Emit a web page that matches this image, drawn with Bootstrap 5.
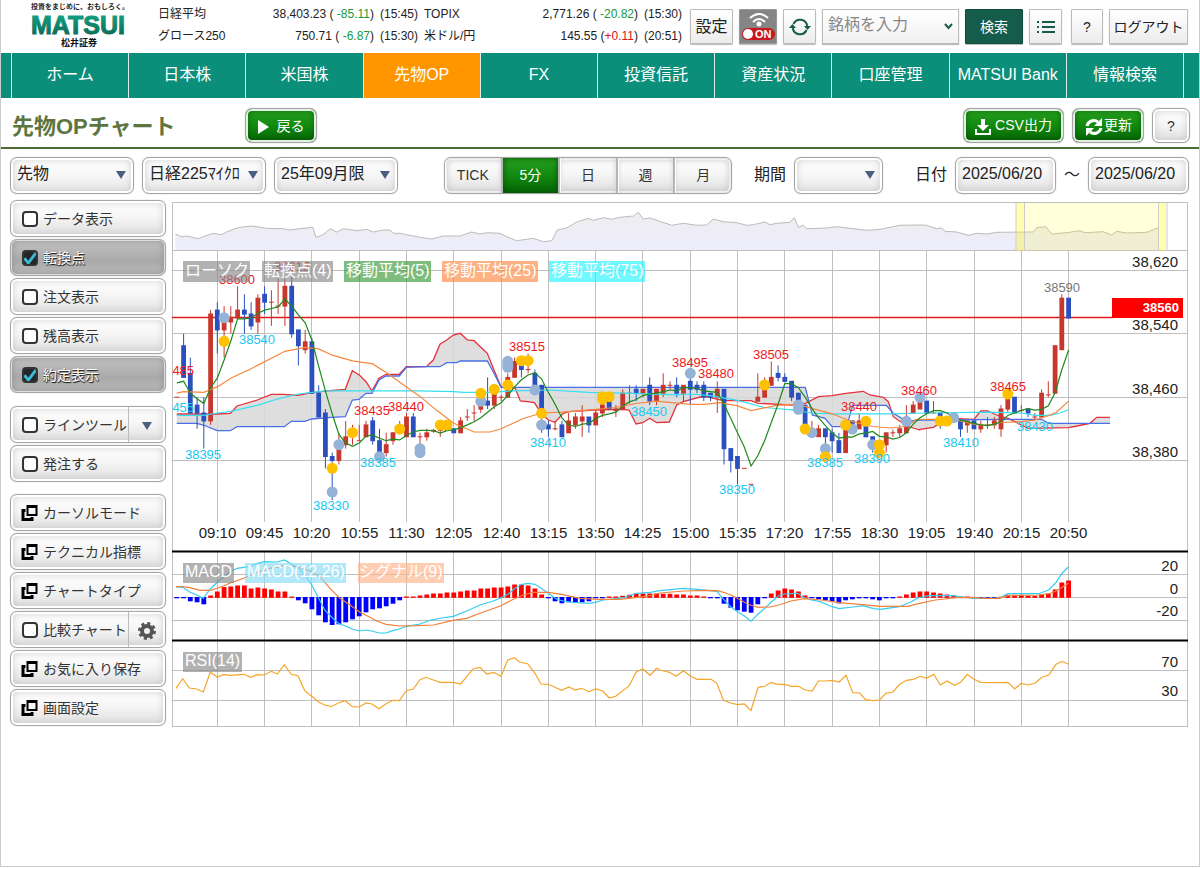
<!DOCTYPE html>
<html lang="ja">
<head>
<meta charset="utf-8">
<meta name="viewport" content="width=device-width, initial-scale=1">
<title>先物OPチャート</title>
<link href="https://cdn.jsdelivr.net/npm/bootstrap@5.3.0/dist/css/bootstrap.min.css" rel="stylesheet">
<style>
:root{--teal:#0b8e7a;--teal-dark:#155c4a;--rule:#4d6b35}
body{font-family:"Liberation Sans","Noto Sans CJK JP",sans-serif;font-size:14px;line-height:20px;color:#222;background:#fff}
.page-frame{min-height:calc(100vh - 2px);border:1px solid #ccc;border-top:0}
.top-bar{height:53px;padding-right:11px}
.brand-box{width:104px;margin-left:26px;color:#222}
.quotes{font-size:12px;color:#222;margin-left:27px;margin-bottom:4px}
.quotes td,.quotes th{padding:0;height:22px;white-space:nowrap;font-weight:400}
.q-name{width:90px}.q-val{width:126px;text-align:right}.q-time{width:50px;text-align:right;padding-right:6px!important}
.q-name2{width:80px}.q-val2{width:134px;text-align:right}
.up{color:#d8141c}.down{color:#159a40}
.tools{gap:6px}
.tool{height:35px;border:1px solid #bbb;border-radius:1px;background:linear-gradient(#fff,#ececec);color:#222;padding:0;box-shadow:0 1px 1px #bbb;display:flex;align-items:center;justify-content:center;font-size:16px;flex:none;white-space:nowrap}
.w33{width:33px}
.tool-help{width:32px;margin-left:3px;font-size:14px}
.tool-search{background:var(--teal-dark);color:#fff;width:58px;font-size:14px;border-color:#0f4a3b}
.tool-set{width:43px}
.tool-out{width:79px;font-size:14px}
.tool-live{background:#858585;width:38px;border-color:#999}
.symbol-box{width:137px;height:35px;position:relative}
.symbol-box input{width:100%;height:35px;border:1px solid #bbb;background:linear-gradient(#fff,#f1f1f1);box-shadow:0 1px 1px #bbb;padding:0 20px 3px 5px;font-size:16px}
.symbol-box input::placeholder{color:#888}
.symbol-box svg{position:absolute;right:6px;top:14px}
.main-nav{background:var(--teal);height:45px;padding:0 15px 0 10px}
.main-nav a{flex:1 1 0;color:#fff;font-size:16px;text-decoration:none;text-align:center;line-height:44px;border-left:1px solid #d8eeea;white-space:nowrap}
.main-nav a:last-child{border-right:1px solid #d8eeea}
.main-nav a.active{background:#ff9600}
.title-row{height:51px;border-bottom:2px solid var(--rule);padding:6px 9px 0 11px}
.title-row h1{font-size:22px;font-weight:700;color:#5d7540;width:233px;line-height:30px;padding-top:2px}
.gloss{border:1px solid #a6a6a6;border-radius:7px;color:#333;background:linear-gradient(#fff,#f6f6f6 45%,#dedede);box-shadow:0 0 1px #999,inset 0 0 0 2px #fff,inset 0 0 8px #bbb;height:37px;padding:0;font-size:14px}
.green{height:35px;background:linear-gradient(#27a020,#128a10 50%,#046304);color:#fff;box-shadow:0 0 1px #999,inset 0 0 0 2px #e3f0e3,inset 0 0 7px #034d03}
.w-back{width:72px}.w-csv{width:101px}.w-ask{width:38px;height:35px}
.controls{padding:7px 10px 6px 9px;height:51px}
.controls select,.controls input{font-size:16px;color:#222;appearance:none;padding:0 0 3px 6px;flex:none}
.controls select{width:124px;background-image:url("data:image/svg+xml,%3Csvg xmlns='http://www.w3.org/2000/svg' width='10' height='8'%3E%3Cpath d='M0 0h10l-5 8z' fill='%234a5f80'/%3E%3C/svg%3E"),linear-gradient(#fff,#f6f6f6 50%,#e4e4e4);background-repeat:no-repeat;background-position:right 7px top 13px,0 0}
.controls .narrow{width:89px}
.controls .date{width:101px}
.controls label{font-size:16px}
.gap-label{margin-left:22px}
.range{width:288px;margin-left:46px;display:flex;overflow:hidden;flex:none}
.range button{flex:1;border:0;border-left:2px solid #b5b5b5;background:none;box-shadow:inset 1px 0 0 #fff,inset 0 0 5px #ccc;color:#333;padding:0}
.range button:first-child{border-left:0}
.range button.active{background:linear-gradient(#27a020,#128a10 50%,#046304);color:#fff;box-shadow:inset 0 0 6px #045004}
.work{padding:0 11px 0 9px;gap:6px}
.side{width:156px;flex:none;gap:2px}
.side .gloss{display:flex;align-items:center;gap:5px;padding:0 0 0 10px;width:100%;cursor:pointer;text-align:left;white-space:nowrap}
.side .on{background:linear-gradient(#c2c2c2,#a9a9a9 60%,#bbb);color:#fff;text-shadow:1px 1px 1px #222,0 1px 0 #444;box-shadow:0 0 1px #999,inset 0 0 0 1px #ddd,inset 0 0 7px #888}
.side input{appearance:none;width:16px;height:16px;border:2px solid #333;border-radius:4px;background:#fff;margin:0 0 0 1px;flex:none}
.side input:checked{background:#23272b url("data:image/svg+xml,%3Csvg xmlns='http://www.w3.org/2000/svg' viewBox='0 0 16 16'%3E%3Cpath d='M2 8l4 5L15 1' fill='none' stroke='%2339b9d6' stroke-width='3'/%3E%3C/svg%3E") center/15px no-repeat}
.side .split{gap:0}
.side .split label{display:flex;gap:5px;align-items:center;height:100%;width:108px;border-right:1px solid #bbb}
.side .split button{border:0;background:none;padding:0;flex:1;height:100%}
.set-top{margin-top:11px}
.set-top2{margin-top:10px}
.plot{flex:1;min-width:0;padding-top:2px}
.plot svg{display:block;width:100%;height:auto;font-family:"Liberation Sans","Noto Sans CJK JP",sans-serif}
.gridline{stroke:#bfbfbf;stroke-width:1}
.axis{font-size:15px;fill:#222}
.tag{font-size:16px;fill:#fff}
.pk{font-size:13px;fill:#f01820;text-anchor:middle}
.bt{font-size:13px;fill:#18c8f0;text-anchor:middle}
.now{fill:#777}
</style>
</head>
<body>
<div class="page-frame">
<header class="top-bar d-flex align-items-center">
  <a href="#" class="brand-box text-decoration-none" aria-label="松井証券">
    <svg class="d-block" width="104" height="53" viewBox="0 0 104 53" font-family="Liberation Sans, Noto Sans CJK JP, sans-serif" font-weight="700" text-anchor="middle">
      <defs><linearGradient id="lg" x2="0" y2="1"><stop offset="0" stop-color="#14a88a"/><stop offset="1" stop-color="#0a6350"/></linearGradient></defs>
      <text x="53" y="9" font-size="7" fill="#222">投資をまじめに、おもしろく。</text>
      <text x="51" y="34" font-size="25" fill="url(#lg)" stroke="url(#lg)" stroke-width="1">MATSUI</text>
      <text x="52" y="46" font-size="9" fill="#111">松井証券</text>
    </svg>
  </a>
  <table class="quotes">
    <tr><th class="q-name">日経平均</th><td class="q-val">38,403.23 ( <span class="down">-85.11</span>)</td><td class="q-time">(15:45)</td><th class="q-name2">TOPIX</th><td class="q-val2">2,771.26 ( <span class="down">-20.82</span>)</td><td class="q-time">(15:30)</td></tr>
    <tr><th>グロース250</th><td class="q-val">750.71 ( <span class="down">-6.87</span>)</td><td class="q-time">(15:30)</td><th>米ドル/円</th><td class="q-val2">145.55 (<span class="up">+0.11</span>)</td><td class="q-time">(20:51)</td></tr>
  </table>
  <div class="tools d-flex ms-auto">
    <button class="tool tool-set">設定</button>
    <button class="tool tool-live" aria-label="自動更新 ON">
      <svg width="36" height="33" viewBox="0 0 36 33"><g fill="none" stroke="#fff" stroke-width="2"><path d="M10 8q9-8 18 0M13 12q6-6 12 0"/></g><circle cx="19" cy="14" r="2.5" fill="#fff"/><rect x="2" y="18" width="33" height="12" rx="6" fill="#c9161c"/><circle cx="8" cy="24" r="5" fill="#fff"/><text x="15" y="28" font-size="11" font-weight="700" fill="#fff">ON</text></svg>
    </button>
    <button class="tool w33" aria-label="再読込"><svg width="22" height="20" viewBox="0 0 22 20" fill="none" stroke="#155c4a" stroke-width="2"><path d="M4.500 7a7.200 7.200 0 0 1 13.700 2M17.500 13a7.200 7.200 0 0 1-13.700-2"/><path d="M15 9h7l-3.500 4zM0 11h7L3.500 7z" fill="#155c4a" stroke="none"/></svg></button>
    <div class="symbol-box"><input type="text" placeholder="銘柄を入力" aria-label="銘柄を入力"><svg width="9" height="7" viewBox="0 0 9 7"><path d="M1 1l3.500 4L8 1" fill="none" stroke="#155c4a" stroke-width="2"/></svg></div>
    <button class="tool tool-search">検索</button>
    <button class="tool w33" aria-label="メニュー"><svg width="18" height="14" viewBox="0 0 18 14" stroke="#155c4a" stroke-width="2"><path d="M0 2h2M5 2h13M0 7h2M5 7h13M0 12h2M5 12h13"/></svg></button>
    <button class="tool tool-help">?</button>
    <button class="tool tool-out">ログアウト</button>
  </div>
</header>
<nav class="main-nav d-flex">
  <a href="#">ホーム</a><a href="#">日本株</a><a href="#">米国株</a><a href="#" class="active">先物OP</a><a href="#">FX</a><a href="#">投資信託</a><a href="#">資産状況</a><a href="#">口座管理</a><a href="#">MATSUI Bank</a><a href="#">情報検索</a>
</nav>
<div class="title-row d-flex align-items-center">
  <h1 class="mb-0">先物OPチャート</h1>
  <button class="gloss green w-back"><svg class="me-2" width="11" height="14" viewBox="0 0 11 14"><path d="M0 0l11 7-11 7z" fill="#fff"/></svg>戻る</button>
  <div class="d-flex ms-auto gap-2">
    <button class="gloss green w-csv"><svg class="me-1" width="16" height="18" viewBox="0 0 16 18" fill="#fff"><path d="M6 1h4v6h4l-6 6-6-6h4zM0 11h2v4h12v-4h2v6H0z"/></svg>CSV出力</button>
    <button class="gloss green w-back"><svg width="20" height="18" viewBox="0 0 20 18" fill="none" stroke="#fff" stroke-width="3"><path d="M3 8a7 7 0 0 1 11-4M17 10a7 7 0 0 1-11 4"/><path d="M18 0v8h-8zM2 18v-8h8z" fill="#fff" stroke="none"/></svg>更新</button>
    <button class="gloss w-ask">?</button>
  </div>
</div>
<form class="controls d-flex align-items-center">
  <select class="gloss" aria-label="商品"><option>先物</option></select>
  <select class="gloss mx-2" aria-label="銘柄"><option>日経225ﾏｲｸﾛ</option></select>
  <select class="gloss" aria-label="限月"><option>25年09月限</option></select>
  <div class="range gloss"><button type="button">TICK</button><button type="button" class="active">5分</button><button type="button">日</button><button type="button">週</button><button type="button">月</button></div>
  <label for="span" class="gap-label me-2">期間</label><select id="span" class="gloss narrow"><option></option></select>
  <label for="from" class="ms-auto me-2">日付</label><input id="from" class="gloss date" value="2025/06/20">
  <label for="to" class="px-2">～</label><input id="to" class="gloss date" value="2025/06/20">
</form>
<svg width="0" height="0" class="d-block"><symbol id="win" viewBox="0 0 16 16"><path d="M0 4h4v3H3v6h6v-1h3v4H0z"/><path d="M5 0h11v11H5zM7 3v6h7V3z" fill-rule="evenodd"/></symbol></svg>
<main class="work d-flex">
  <div class="side d-flex flex-column">
    <label class="gloss"><input type="checkbox">データ表示</label>
    <label class="gloss on"><input type="checkbox" checked>転換点</label>
    <label class="gloss"><input type="checkbox">注文表示</label>
    <label class="gloss"><input type="checkbox">残高表示</label>
    <label class="gloss on"><input type="checkbox" checked>約定表示</label>
    <div class="gloss split set-top"><label><input type="checkbox">ラインツール</label><button aria-label="ラインツールの種類"><svg width="10" height="8"><path d="M0 0h10l-5 8z" fill="#4a5f80"/></svg></button></div>
    <label class="gloss"><input type="checkbox">発注する</label>
    <button class="gloss set-top2"><svg width="17" height="16"><use href="#win"/></svg>カーソルモード</button>
    <button class="gloss"><svg width="17" height="16"><use href="#win"/></svg>テクニカル指標</button>
    <button class="gloss"><svg width="17" height="16"><use href="#win"/></svg>チャートタイプ</button>
    <div class="gloss split"><label><input type="checkbox">比較チャート</label><button aria-label="比較チャートの設定"><svg width="18" height="18" viewBox="-9 -9 18 18"><circle r="5" fill="none" stroke="#555" stroke-width="4"/><circle r="7.500" fill="none" stroke="#555" stroke-width="3" stroke-dasharray="3 2.890"/></svg></button></div>
    <button class="gloss"><svg width="17" height="16"><use href="#win"/></svg>お気に入り保存</button>
    <button class="gloss"><svg width="17" height="16"><use href="#win"/></svg>画面設定</button>
  </div>
  <div class="plot">
  <svg viewBox="172 202 1016 525" role="img" aria-label="日経225マイクロ 5分足チャート">
    <defs><linearGradient id="ov" x2="0" y2="1"><stop offset="0" stop-color="#eee"/><stop offset="1" stop-color="#edecfc"/></linearGradient></defs>
    <g id="grid"></g>
    <g id="overview"></g>
    <g fill="#ff0" fill-opacity=".15"><rect x="1016" y="203" width="150" height="48"/><rect x="1016" y="203" width="8" height="48" fill-opacity=".2"/><rect x="1158" y="203" width="8" height="48" fill-opacity=".2"/></g>
    <path d="M1016 203v48M1024.500 203v48M1158.500 203v48M1167 203v48" stroke="#ccc" fill="none"/>
    <g id="cloud"></g>
    <path d="M172 317.500H1113" stroke="#e01b1b" stroke-width="1.500"/>
    <g id="candles"></g>
    <g id="lines" fill="none" stroke-width="1.200"></g>
    <g id="marks"></g>
    <g>
      <text class="pk" x="292" y="271">38615</text><text class="pk" x="237" y="284">38600</text><text class="pk" x="176" y="375">38485</text><text class="bt" x="176" y="412">38455</text><text class="bt" x="203" y="459">38395</text><text class="bt" x="257" y="344">38540</text><text class="bt" x="331" y="510">38330</text><text class="bt" x="378" y="467">38385</text><text class="pk" x="372" y="415">38435</text><text class="pk" x="406" y="411">38440</text><text class="pk" x="527" y="351">38515</text><text class="bt" x="548" y="447">38410</text><text class="bt" x="649" y="416">38450</text><text class="pk" x="690" y="367">38495</text><text class="pk" x="716" y="378">38480</text><text class="pk" x="771" y="359">38505</text><text class="bt" x="737" y="494">38350</text><text class="pk" x="859" y="411">38440</text><text class="bt" x="825" y="467">38385</text><text class="bt" x="872" y="463">38390</text><text class="pk" x="919" y="395">38460</text><text class="pk" x="1008" y="391">38465</text><text class="bt" x="961" y="447">38410</text><text class="bt" x="1035" y="431">38430</text><text class="pk now" x="1062" y="292">38590</text>
    </g>
    <g id="macd"></g>
    <g id="sub" fill="none" stroke-width="1.200"></g>
    <g fill-opacity=".65">
      <rect x="183" y="261" width="67" height="21" fill="#888"/><rect x="262" y="261" width="71" height="21" fill="#888"/><rect x="344" y="261" width="87" height="21" fill="#3a9a3a"/><rect x="442" y="261" width="96" height="21" fill="#ff8740"/><rect x="549" y="261" width="96" height="21" fill="#22f4ff"/>
      <rect x="183" y="563" width="51" height="20" fill="#888"/><rect x="245" y="563" width="101" height="20" fill="#8adcf6"/><rect x="358" y="563" width="86" height="20" fill="#ffb388"/><rect x="183" y="652" width="59" height="20" fill="#888"/>
    </g>
    <g class="tag"><text x="185" y="276">ローソク</text><text x="264" y="276">転換点(4)</text><text x="346" y="276">移動平均(5)</text><text x="444" y="276">移動平均(25)</text><text x="551" y="276">移動平均(75)</text><text x="185" y="577">MACD</text><text x="247" y="577">MACD(12,26)</text><text x="359" y="577">シグナル(9)</text><text x="185" y="666">RSI(14)</text></g>
    <g class="axis" text-anchor="end"><text x="1178" y="267">38,620</text><text x="1178" y="330">38,540</text><text x="1178" y="394">38,460</text><text x="1178" y="457">38,380</text><text x="1178" y="571">20</text><text x="1178" y="594">0</text><text x="1178" y="616">-20</text><text x="1178" y="667">70</text><text x="1178" y="696">30</text></g>
    <rect x="1112" y="298" width="71" height="20" fill="#f00"/><text x="1179" y="312" text-anchor="end" font-size="13" font-weight="700" fill="#fff">38560</text>
    <g id="times" class="axis" text-anchor="middle"></g>
  </svg>
  </div>
</main>
</div>
<script>
const $=id=>document.getElementById(id), X=i=>176.8+6.756*i, Y=p=>270.5+(620-p)*.7917;
// grid and time axis
const times="09:10 09:45 10:20 10:55 11:30 12:05 12:40 13:15 13:50 14:25 15:00 15:35 17:20 17:55 18:30 19:05 19:40 20:15 20:50".split(" ");
let g="",t="";
times.forEach((s,k)=>{const x=Math.floor(X(6+7*k))+.5;g+=`<path class="gridline" d="M${x} 251V522M${x} 552V727"/>`;t+=`<text x="${x}" y="538">${s}</text>`});
[250.5,270.5,333.5,397.5,460.5,574.5,597.5,620.5,670.5,700.5,726.5].forEach(y=>g+=`<path class="gridline" d="M172 ${y}H1188"/>`);
g+='<path d="M172.500 727V202.500H1187.500V727" fill="none" stroke="#bfbfbf"/><path d="M172 551.500H1188M172 640.500H1188" stroke="#000" stroke-width="2"/>';
$("grid").innerHTML=g;$("times").innerHTML=t;
// candles: open, high, low, close (38,000 + n)
const C=`460,460,460,460 525,540,485,485 490,510,440,440 450,460,420,440 440,460,395,430 430,570,425,565 570,580,515,545 545,575,510,555 555,575,540,560 560,600,560,570 570,590,540,565 565,580,545,550 555,590,540,585 590,600,565,580 580,595,550,580 575,610,565,575 575,610,550,600 600,612,535,540 545,545,500,525 520,545,515,530 530,535,465,465 465,475,435,435 440,445,370,385 385,390,330,380 380,415,375,400 400,430,395,410 412,425,400,415 405,425,405,405 410,430,410,425 430,435,400,405 405,420,385,390 390,415,385,400 405,416,400,415 418,430,418,420 410,440,410,435 435,440,410,410 410,415,385,410 410,420,405,415 417,420,415,418 418,425,410,420 418,425,418,425 420,420,415,415 415,435,415,430 435,445,430,435 440,450,430,440 445,470,440,450 455,485,445,450 450,475,445,465 460,463,455,460 460,490,460,485 485,510,485,505 500,505,485,495 495,515,490,495 490,495,475,475 475,475,415,445 425,430,410,420 420,430,418,420 425,430,410,410 415,440,415,430 425,440,420,435 430,450,410,435 435,435,415,425 425,445,425,440 440,455,435,450 455,455,445,445 443,450,435,445 445,470,445,465 465,475,452,465 470,475,455,465 465,470,460,470 475,485,450,455 455,470,450,470 465,490,460,475 475,480,470,475 475,485,460,465 465,475,455,475 480,485,450,470 475,480,465,470 475,480,455,460 465,465,455,460 460,480,440,470 470,470,375,395 395,395,365,380 385,385,350,370 370,370,370,370 350,350,350,350 455,490,455,460 460,485,460,475 475,505,475,485 490,500,480,485 485,490,480,480 480,480,455,460 465,465,445,450 450,450,425,425 415,430,412,415 410,425,410,420 420,420,385,410 415,420,390,405 405,415,390,390 390,430,390,425 430,430,418,418 420,440,420,430 425,430,410,410 410,410,390,400 395,405,385,395 400,415,390,415 415,419,410,415 415,425,410,420 415,450,415,430 440,455,440,450 445,460,445,455 455,455,440,440 440,455,440,440 440,440,420,430 430,435,430,435 432,435,428,430 430,430,410,420 425,430,415,430 430,430,420,420 420,430,415,425 425,435,420,425 425,435,420,430 420,450,410,445 445,465,440,460 460,460,440,440 443,450,440,443 445,445,435,440 435,440,432,435 435,470,435,465 463,480,460,463 465,525,465,525 520,590,520,585 585,585,560,560`.split(" ").map(s=>s.split(",").map(Number));
$("candles").innerHTML=C.map(([o,h,l,c],i)=>{const f=c>=o?"#c8372d":"#2b4fbe",x=X(i);return `<path d="M${x.toFixed(1)} ${Y(h).toFixed(1)}V${Y(l).toFixed(1)}" stroke="${f}"/><rect x="${(x-2.4).toFixed(1)}" y="${(Y(Math.max(o,c))-.5).toFixed(1)}" width="4.8" height="${(Math.abs(o-c)*.7917+1).toFixed(1)}" fill="${f}"/>`}).join("");
// moving averages
const poly=(d,col)=>`<polyline points="${d}" stroke="${col}"/>`;
const ser=s=>s.split(" ").map(p=>{const[a,b]=p.split(",");return X(+a).toFixed(1)+","+Y(+b).toFixed(1)}).join(" ");
const ma5=[478,480,465,458,452];for(let i=5;i<C.length;i++)ma5.push(C.slice(i-4,i+1).reduce((a,c)=>a+c[3],0)/5);
const ma25="0,465 1,467 4,466 6,473 8,484 11,496 16,518 19,523 21,521 23,513 26,506 29,502 31,491 34,473 36,461 38.5,443 41,427 44,416 46.4,416 48,420 51.3,433 54,440 57,441 60,443 65,447 68,452 71,455 76,451 78,451 80.4,453 83,449 85,443 89,450 92,451 94,446 97,439 100,429 103,423 105.600,421 108,423 109.500,432 115,432 118,426 120,424 122,428 125,429 127,431 128.800,436 130.200,441 132,455";
const ma75="0,437 4,437 6,440 8,442 12,450 15,458 18,464 22,468 36,468 41,467 42.500,466 46,466 50,468 55,469 61,466 66,465 74,463 76,464 79,462 83,456 87,447 91,444 94,440 97,439 105,439 111,440 120,441 125,440 127,437 129.300,437 130.700,440 132,444";
$("lines").innerHTML=poly(ser(ma75),"#35dff0")+poly(ser(ma25),"#f5873f")+poly(ser(ma5.map((v,i)=>i+","+v).join(" ")),"#1d8a1d");
// cloud, session by session; values are thirds of a unit from each session's origin
const at=(ox,oy,s,kx=3)=>s.split(" ").map(p=>{const[a,b]=p.split(",");return (ox+a/kx).toFixed(1)+","+(oy+b/3).toFixed(1)}).join(" ");
const up=[at(170,250,"20,492 142,492 181,490 201,468 262,450 304,433 343,433 384,436 425,428 480,422 526,418 547,362 568,375 588,395 606,423 627,385 648,373 688,373 709,350 769,350"),
at(420,250,"40,330 60,283 80,270 100,255 121,250 142,270 162,272 181,290 202,310 222,360 243,410 262,417 285,413 301,453 322,455 343,458 364,490 385,510 405,517 430,490 447,485 526,480 606,478 627,480 648,522 668,518 689,505 710,518 748,516"),
at(670,250,"20,465 40,455 101,438 160,452 243,452 264,460 385,466 406,460 445,440 486,437 527,430 580,424 600,435 640,442 655,455 670,500 710,528 749,540"),
at(920,200,"0,688 40,682 61,670 100,655 162,658 182,633 203,633 223,642 244,650 265,655 304,675 325,685 446,683 486,675 510,670 530,652 570,652")].join(" ");
const lo=[at(170,250,"20,520 80,520 100,525 142,542 181,542 201,530 343,530 364,514 404,514 425,507 484,502 526,500 547,450 567,448 588,430 606,430 627,390 648,378 688,378 709,352 769,350"),
at(420,250,"60,350 80,338 110,338 121,333 202,333 222,370 243,412"),
at(670,250,"20,412 406,412 427,495 465,505 486,530 530,530 548,466 649,466 670,490 710,514"),
at(920,200,"0,660 40,660 365,658 385,670 570,670")].join(" ");
$("cloud").innerHTML=`<polygon points="${up} ${lo.split(" ").reverse().join(" ")}" fill="#d8d8d8" fill-opacity=".85"/><g fill="none" stroke-width="1.3">${poly(up,"#e8303a")+poly(lo,"#4a70e8")}</g>`;
// executions and turning points
const dots=(s,c)=>s.split(" ").map(p=>{const[a,b]=p.split(",");return `<circle cx="${X(+a).toFixed(1)}" cy="${(250+b/3).toFixed(1)}" r="5.5" fill="${c}"/>`}).join("");
$("marks").innerHTML=dots("7,203 23,726 24,584 30,620 36,596 36,608 45,454 49,334 49,343 49,352 53,420 54,525 76,370 92,465 92,478 94,548 96,596 100,537 103,584 108,514 110,442 115,503","#95b3d7")+dots("7,274 23,655 26,548 33,537 39,525 40,525 45,430 47,418 49,405 51,332 52,332 54,490 63,447 63,440 64,440 87,405 93,537 96,620 99,525 102,514 104,584 104,608 113,513 114,513 123,432","#ffc000");
// MACD histogram
$("macd").innerHTML="-4 -4 -13 -16 -22 7 19 32 34 37 37 28 31 28 25 19 19 4 -10 -19 -37 -55 -76 -84 -82 -76 -67 -58 -46 -37 -34 -28 -20 -10 4 4 7 10 13 13 16 16 19 22 22 28 28 31 31 34 40 40 37 28 10 -4 -13 -19 -16 -16 -16 -13 -4 -4 4 4 6 9 13 13 13 13 12 12 10 10 7 7 4 -4 -4 -20 -32 -40 -44 -47 -22 -4 13 22 28 25 19 7 -4 -7 -10 -13 -19 -10 -7 -4 -4 -7 -10 -4 -4 4 10 16 19 19 16 13 10 7 4 4 -2 -3 -3 -3 3 9 9 9 7 6 10 13 25 46 52".split(" ").map((v,i)=>{const h=Math.abs(v)/3;return `<rect x="${(X(i)-2.4).toFixed(1)}" y="${(v>0?597.8-h:597).toFixed(1)}" width="4.800" height="${h.toFixed(1)}" fill="${v>0?"#f00":"#00f"}"/>`}).join("");
const K=2.904;
$("sub").innerHTML=poly(at(170,545,"18,125 38,127 58,140 80,150 100,160 121,132 142,112 160,97 181,80 201,70 221,67 242,64 262,55 283,50 322,51 343,45 364,57 384,68 404,90 425,120 446,160 464,195 484,215 505,235 526,243 547,252 568,258 590,255 605,258 627,264 648,264 668,257 688,252 709,244 750,237 780,226 815,219 850,214 890,198 930,180 970,168 993,158 1015,147 1035,130 1055,118 1075,115 1095,118 1113,130 1135,145 1160,163 1180,168 1210,172 1258,175 1276,172 1300,165 1320,163 1360,158 1400,145 1440,142")+" "+at(660,545,"0,137 30,134 68,130 110,133 165,139 185,163 205,185 225,200 245,213 264,229 285,207 305,190 322,172 345,152 362,147 400,145 420,158 440,165 465,170 500,185 520,191 560,186 590,182 620,191 640,193 695,185 730,170 750,158 780,152 850,152 880,156 910,160 985,160 1010,146 1100,146 1130,134 1150,112 1168,84 1186,66",K),"#35ccf2")
+poly(at(170,545,"18,125 40,125 60,128 90,136 121,136 142,130 160,123 181,114 221,100 262,82 300,70 343,62 384,66 420,78 450,95 480,130 510,160 540,180 570,202 600,217 620,228 648,238 690,243 740,242 790,240 850,226 890,220 930,205 993,182 1030,163 1060,150 1090,142 1135,142 1175,148 1230,160 1290,163 1350,163 1400,157 1440,152")+" "+at(660,545,"0,144 70,138 130,136 165,137 185,142 205,150 225,160 245,172 264,181 285,187 320,186 345,180 380,168 420,161 470,165 520,173 580,178 640,184 720,184 750,176 800,165 860,158 910,157 940,160 985,160 1010,152 1100,150 1130,146 1150,138 1168,127 1186,115",K),"#f0803a")
+poly(at(170,545,"18,430 38,401 58,429 80,432 100,441 121,382 142,396 160,389 181,391 221,388 242,397 262,389 283,390 304,379 322,387 343,359 364,388 384,392 404,437 425,454 446,471 464,480 484,485 505,474 526,467 547,485 568,486 588,474 606,477 627,491 648,476 668,466 688,467 709,437 730,432 750,404 768,397 790,405 810,412 850,412 872,417 890,395 910,371 930,367 950,387 972,382 993,394 1013,345 1033,338 1050,352 1073,356 1095,385 1113,417 1135,418 1155,427 1175,436 1197,426 1215,435 1235,430 1256,440 1277,432 1298,438 1318,459 1337,454 1378,422 1398,382 1418,371 1440,391 1460,370")+" "+at(660,545,"0,375 28,382 47,394 68,377 88,393 108,403 148,403 165,415 184,465 205,474 225,479 245,477 264,497 285,427 305,424 322,412 342,418 362,418 382,424 402,424 422,435 442,438 460,408 480,408 500,406 520,411 540,391 560,443 580,444 597,464 617,467 638,465 656,445 676,441 696,418 716,406 736,403 756,394 774,400 795,388 814,420 834,408 855,421 874,411 892,388 912,403 932,412 992,413 1010,412 1030,432 1049,415 1069,420 1090,414 1109,397 1129,390 1150,358 1168,349 1186,358",K),"#f5a52a");
// long-range overview
const ov=at(0,150,"526,252 545,260 560,258 595,266 615,258 640,250 665,254 680,246 700,238 720,232 755,228 800,235 850,236 870,240 900,236 938,232 948,262 965,256 975,250 990,236 1010,246 1030,236 1070,242 1100,238 1120,246 1150,240 1170,240 1180,250 1200,250 1220,254 1250,260 1295,267 1330,258 1380,258 1415,246 1440,252 1460,248 1500,250 1520,260 1550,272 1580,268 1600,265 1630,275 1655,272 1672,240 1700,234 1730,216 1765,205 1780,211 1810,203 1835,208 1860,202 1900,198 1915,187 1930,207 1950,204 1980,214 2015,226 2050,220 2090,226 2120,225 2140,207 2170,215 2210,218 2240,226 2260,224 2295,216 2310,224 2330,220 2370,217 2383,203 2395,232 2410,226 2420,236 2480,234 2510,230 2550,235 2600,241 2640,238 2700,226 2760,225 2780,226 2810,236 2825,234 2835,244 2870,246 2905,256 2930,250 2960,252 2990,247 3100,246 3110,233 3138,230 3155,252 3200,248 3240,242 3255,248 3310,245 3335,255 3350,244 3380,249 3440,247 3476,233");
$("overview").innerHTML=`<polygon points="175.3,250 ${ov} 1158.7,250" fill="url(#ov)"/><polyline points="${ov}" fill="none" stroke="#bbb"/>`;
</script>
<script src="https://cdn.jsdelivr.net/npm/bootstrap@5.3.0/dist/js/bootstrap.bundle.min.js"></script>
</body>
</html>
